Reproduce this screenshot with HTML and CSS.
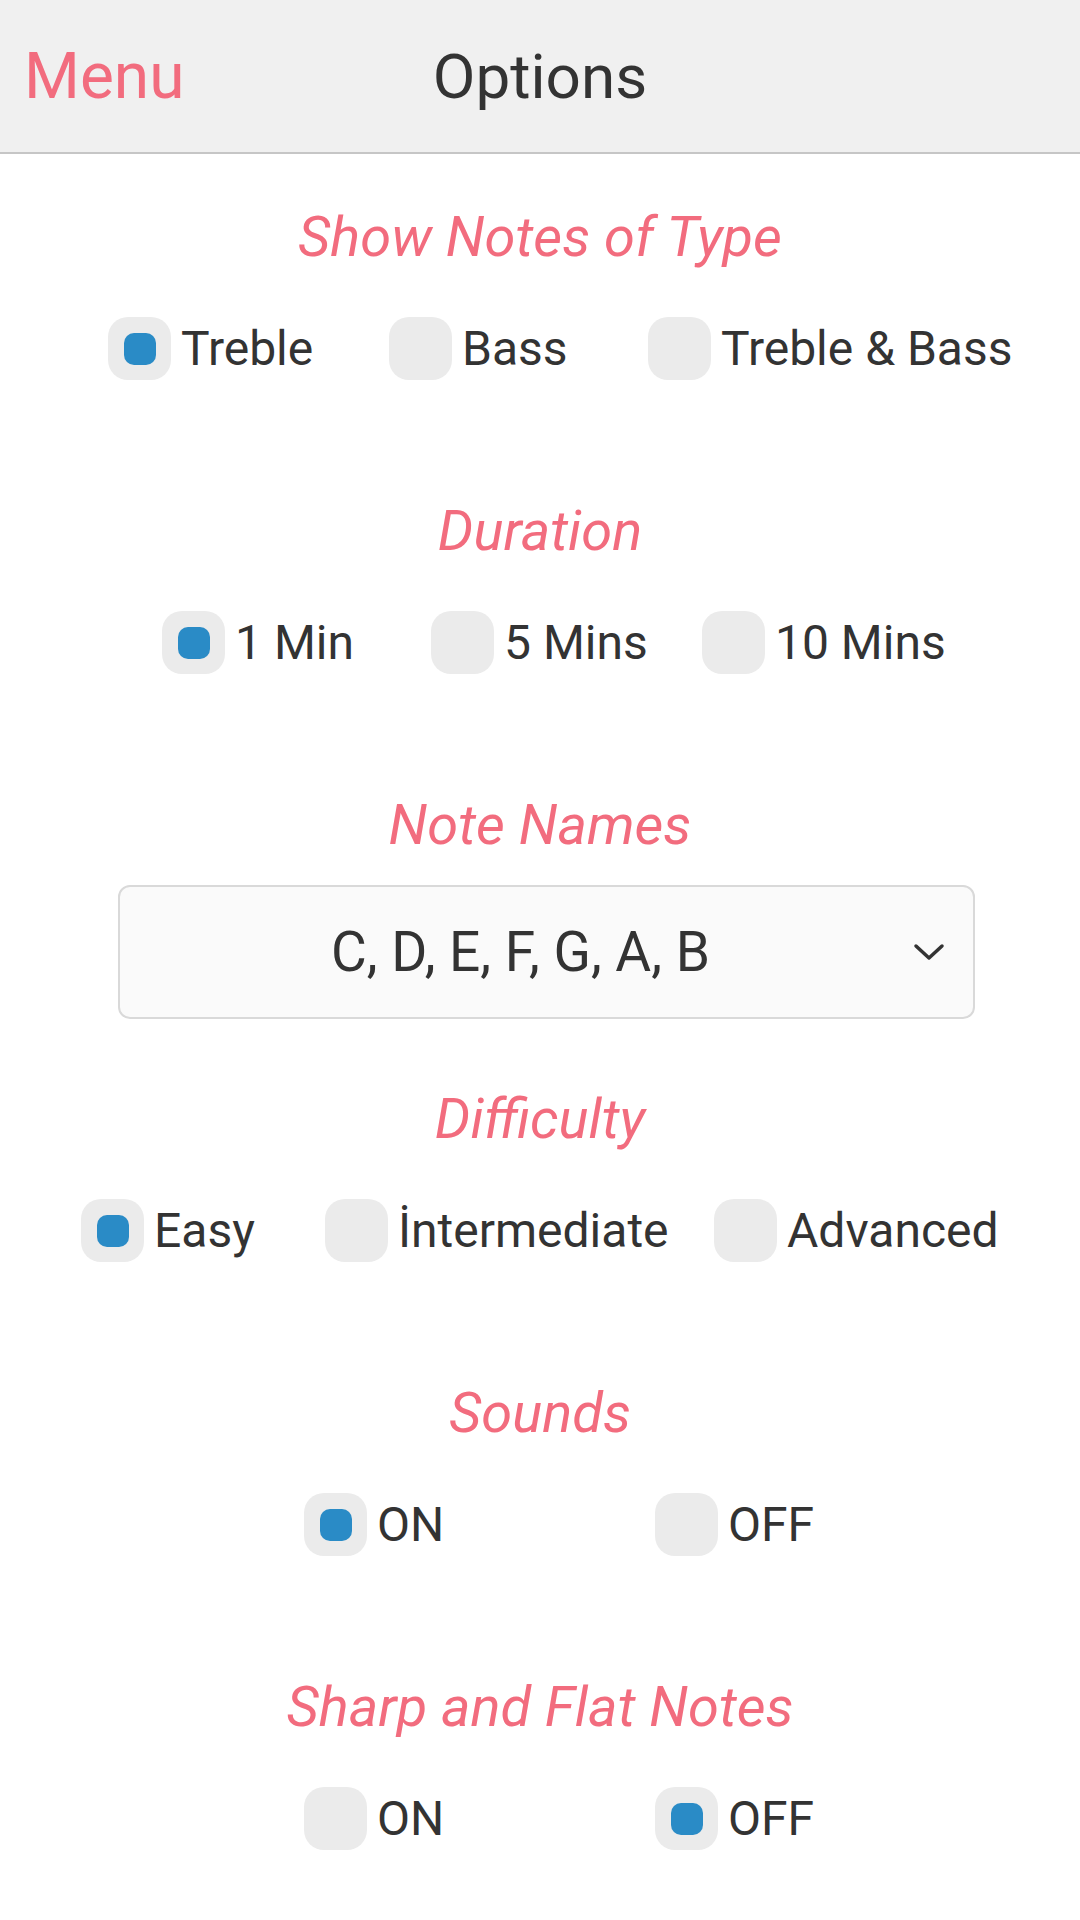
FILE: index.html
```html
<!DOCTYPE html>
<html lang="en">
<head>
    <meta charset="UTF-8">
    <meta name="viewport" content="width=device-width, initial-scale=1.0">
    <title>Options</title>
    <link rel="stylesheet" href="styles.css">
</head>
<body>
    <header class="topbar">
        <a class="topbar-menu" href="#">Menu</a>
        <h1 class="topbar-title">Options</h1>
        <span></span>
    </header>
    <main class="options">
        <section class="section">
            <h2 class="section-title">Show Notes of Type</h2>
            <div class="choices choices--type">
                <label class="choice"><span class="radio checked"></span>Treble</label>
                <label class="choice"><span class="radio"></span>Bass</label>
                <label class="choice"><span class="radio"></span>Treble &amp; Bass</label>
            </div>
        </section>
        <section class="section">
            <h2 class="section-title">Duration</h2>
            <div class="choices choices--duration">
                <label class="choice"><span class="radio checked"></span>1 Min</label>
                <label class="choice"><span class="radio"></span>5 Mins</label>
                <label class="choice"><span class="radio"></span>10 Mins</label>
            </div>
        </section>
        <section class="section section--select">
            <h2 class="section-title">Note Names</h2>
            <div class="select">
                <span class="select-value">C, D, E, F, G, A, B</span>
                <svg class="select-arrow" viewBox="0 0 32 18" width="32" height="18">
                    <polyline points="3,3 16,15 29,3" fill="none" stroke="#333" stroke-width="3.5" stroke-linecap="round" stroke-linejoin="round"/>
                </svg>
            </div>
        </section>
        <section class="section">
            <h2 class="section-title">Difficulty</h2>
            <div class="choices choices--difficulty">
                <label class="choice"><span class="radio checked"></span>Easy</label>
                <label class="choice"><span class="radio"></span>İntermediate</label>
                <label class="choice"><span class="radio"></span>Advanced</label>
            </div>
        </section>
        <section class="section">
            <h2 class="section-title">Sounds</h2>
            <div class="choices choices--toggle">
                <label class="choice"><span class="radio checked"></span>ON</label>
                <label class="choice"><span class="radio"></span>OFF</label>
            </div>
        </section>
        <section class="section">
            <h2 class="section-title">Sharp and Flat Notes</h2>
            <div class="choices choices--toggle">
                <label class="choice"><span class="radio"></span>ON</label>
                <label class="choice"><span class="radio checked"></span>OFF</label>
            </div>
        </section>
    </main>
</body>
</html>
```

FILE: styles.css
```css
/* Base */
body {
    margin: 0;
    font-family: Roboto, 'Noto Sans', sans-serif;
    color: #333;
    background-color: #fff;
}

/* Top bar */
.topbar {
    display: grid;
    grid-template-columns: 1fr auto 1fr;
    align-items: center;
    height: 152px;
    background-color: #f0f0f0;
    border-bottom: 2px solid #c6c6c6;
}

.topbar-menu {
    justify-self: start;
    padding-left: 24px;
    font-size: 64px;
    color: #f26c7e;
    text-decoration: none;
}

.topbar-title {
    margin: 0;
    font-size: 62px;
    font-weight: normal;
    color: #333;
}

/* Sections */
.options {
    padding-top: 48px;
}

.section {
    margin-bottom: 116px;
}

.section--select {
    margin-bottom: 65px;
}

.section-title {
    margin: 0;
    height: 70px;
    line-height: 70px;
    font-size: 56px;
    font-weight: normal;
    font-style: italic;
    text-align: center;
    color: #f26c7e;
}

/* Radio rows */
.choices {
    display: grid;
    margin-top: 45px;
}

.choices--type {
    grid-template-columns: 281px 259px auto;
    padding-left: 108px;
}

.choices--duration {
    grid-template-columns: 269px 271px auto;
    padding-left: 162px;
}

.choices--difficulty {
    grid-template-columns: 244px 389px auto;
    padding-left: 81px;
}

.choices--toggle {
    grid-template-columns: 351px auto;
    padding-left: 304px;
}

.choice {
    display: flex;
    align-items: center;
    gap: 10px;
    height: 63px;
    font-size: 48px;
    color: #333;
    white-space: nowrap;
}

.radio {
    display: flex;
    align-items: center;
    justify-content: center;
    flex: none;
    width: 63px;
    height: 63px;
    border-radius: 20px;
    background-color: #ebebeb;
}

.radio.checked::after {
    content: "";
    width: 32px;
    height: 32px;
    border-radius: 10px;
    background-color: #2a8bc6;
}

/* Select */
.select {
    display: flex;
    align-items: center;
    margin: 25px 105px 0 118px;
    height: 130px;
    padding: 0 28px 0 8px;
    border: 2px solid #d9d9d9;
    border-radius: 12px;
    background-color: #fafafa;
}

.select-value {
    flex: 1;
    text-align: center;
    font-size: 55px;
    color: #333;
}

.select-arrow {
    flex: none;
}
```
